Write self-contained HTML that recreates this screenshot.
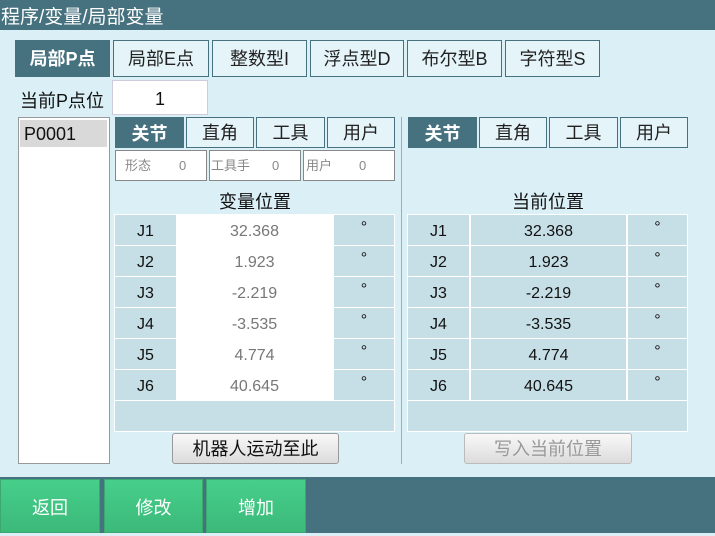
<!DOCTYPE html>
<html><head><meta charset="utf-8"><style>
*{margin:0;padding:0;box-sizing:border-box}
body{width:715px;height:533px;background:#dbf0f6;position:relative;overflow:hidden;font-family:"Liberation Sans","Noto Sans CJK SC",sans-serif;color:#111}
.a{position:absolute}
.hdr{left:0;top:0;width:715px;height:30px;background:#46717f;color:#fff;font-size:19px;line-height:36px;padding-left:1px}
.tab{position:absolute;border:1px solid #46717f;background:#e4f4f9;font-size:18px;text-align:center;color:#222}
.tab.on{background:#46717f;color:#fff;font-weight:bold}
.c{position:absolute;background:#c6dfe6;text-align:center;font-size:16px;line-height:33px}
.w{background:#fff;color:#777}
.btn{position:absolute;border:1px solid #999;border-radius:3px;background:linear-gradient(#f8f8f8,#dcdcdc);font-size:18px;text-align:center;line-height:30px}
.g{position:absolute;top:479px;height:54px;background:linear-gradient(#46cf8a,#3cb97a);color:#fff;font-size:18px;text-align:center;line-height:56px;border:1px solid #3aa870}
.info{position:absolute;top:150px;height:31px;border:1px solid #888;background:#fff;font-size:13px;color:#888;line-height:29px}
</style></head><body>
<div class="a hdr">程序/变量/局部变量</div>
<div class="tab on" style="left:15px;top:40px;width:95px;height:37px;line-height:37px">局部P点</div>
<div class="tab" style="left:113px;top:40px;width:96px;height:37px;line-height:37px">局部E点</div>
<div class="tab" style="left:212px;top:40px;width:95px;height:37px;line-height:37px">整数型I</div>
<div class="tab" style="left:310px;top:40px;width:94px;height:37px;line-height:37px">浮点型D</div>
<div class="tab" style="left:407px;top:40px;width:95px;height:37px;line-height:37px">布尔型B</div>
<div class="tab" style="left:505px;top:40px;width:95px;height:37px;line-height:37px">字符型S</div>
<div class="a" style="left:20px;top:87px;font-size:18px">当前P点位</div>
<div class="a" style="left:112px;top:80px;width:96px;height:35px;background:#fff;border:1px solid #ccd;text-align:center;font-size:18px;line-height:36px">1</div>
<div class="a" style="left:18px;top:117px;width:92px;height:347px;background:#fff;border:1px solid #999"></div>
<div class="a" style="left:20px;top:120px;width:87px;height:27px;background:#d9d9d9;font-size:18px;line-height:29px;padding-left:4px">P0001</div>

<div class="tab on" style="left:115px;top:117px;width:69px;height:31px;line-height:32px">关节</div>
<div class="tab" style="left:186px;top:117px;width:68px;height:31px;line-height:31px">直角</div>
<div class="tab" style="left:256px;top:117px;width:69px;height:31px;line-height:31px">工具</div>
<div class="tab" style="left:327px;top:117px;width:68px;height:31px;line-height:31px">用户</div>
<div class="info" style="left:115px;width:92px"><span style="position:absolute;left:9px">形态</span><span style="position:absolute;left:63px">0</span></div>
<div class="info" style="left:209px;width:92px"><span style="position:absolute;left:1px">工具手</span><span style="position:absolute;left:62px">0</span></div>
<div class="info" style="left:303px;width:92px"><span style="position:absolute;left:2px">用户</span><span style="position:absolute;left:55px">0</span></div>

<div class="a" style="left:115px;top:188px;width:280px;text-align:center;font-size:18px">变量位置</div>
<div class="a" style="left:408px;top:188px;width:280px;text-align:center;font-size:18px">当前位置</div>

<div class="tab on" style="left:408px;top:117px;width:69px;height:31px;line-height:32px">关节</div>
<div class="tab" style="left:479px;top:117px;width:68px;height:31px;line-height:31px">直角</div>
<div class="tab" style="left:549px;top:117px;width:69px;height:31px;line-height:31px">工具</div>
<div class="tab" style="left:620px;top:117px;width:68px;height:31px;line-height:31px">用户</div>

<div class="a" style="left:401px;top:117px;width:1px;height:347px;background:#aaa"></div>
<div class="a" style="left:114px;top:214px;width:281px;height:218px;background:#fff"></div>
<div class="a" style="left:407px;top:214px;width:281px;height:218px;background:#fff"></div>

<div id="t"></div>
<script>
var v=["32.368","1.923","-2.219","-3.535","4.774","40.645"],h="";
for(var i=0;i<6;i++){var y=215+i*31;
h+='<div class="c" style="left:115px;top:'+y+'px;width:61px;height:30px">J'+(i+1)+'</div>';
h+='<div class="c w" style="left:177px;top:'+y+'px;width:155px;height:30px">'+v[i]+'</div>';
h+='<div class="c" style="left:334px;top:'+y+'px;width:60px;height:30px;line-height:26px">°</div>';
h+='<div class="c" style="left:408px;top:'+y+'px;width:61px;height:30px">J'+(i+1)+'</div>';
h+='<div class="c" style="left:471px;top:'+y+'px;width:155px;height:30px">'+v[i]+'</div>';
h+='<div class="c" style="left:628px;top:'+y+'px;width:59px;height:30px;line-height:26px">°</div>';}
h+='<div class="c" style="left:115px;top:401px;width:279px;height:30px"></div>';
h+='<div class="c" style="left:408px;top:401px;width:279px;height:30px"></div>';
document.getElementById("t").innerHTML=h;
</script>
<div class="btn" style="left:172px;top:433px;width:167px;height:31px">机器人运动至此</div>
<div class="btn" style="left:464px;top:433px;width:168px;height:31px;color:#999;border-color:#bbb">写入当前位置</div>

<div class="a" style="left:0;top:477px;width:715px;height:56px;background:#46717f"></div>
<div class="g" style="left:0;width:100px">返回</div>
<div class="g" style="left:104px;width:99px">修改</div>
<div class="g" style="left:206px;width:100px">增加</div>
</body></html>
